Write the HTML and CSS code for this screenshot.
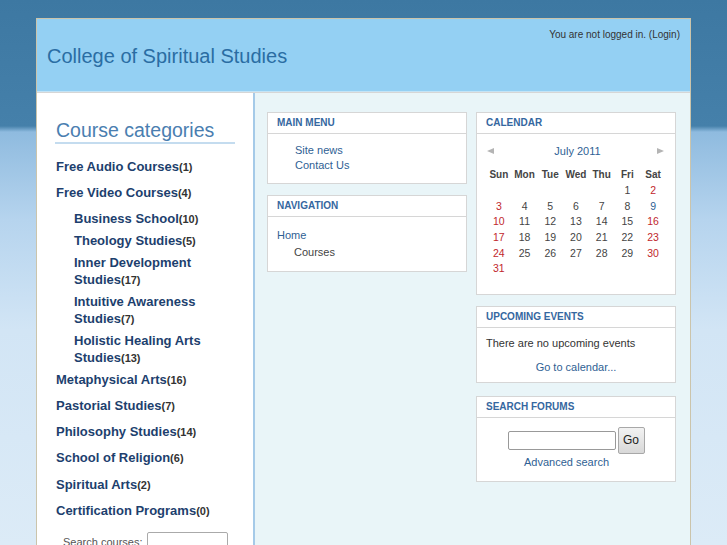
FILE: index.html
```html
<!DOCTYPE html>
<html>
<head>
<meta charset="utf-8">
<title>College of Spiritual Studies</title>
<link rel="stylesheet" href="styles.css">
</head>
<body>
<div class="page">
  <div class="header">
    <div class="login">You are not logged in. (<a href="#">Login</a>)</div>
    <h1 class="title">College of Spiritual Studies</h1>
  </div>
  <div class="main">
    <div class="left">
      <h2 class="cat-heading">Course categories</h2>
      <ul class="cats">
        <li class="cat"><a href="#">Free Audio Courses</a><span class="count">(1)</span></li>
        <li class="cat"><a href="#">Free Video Courses</a><span class="count">(4)</span></li>
        <li class="sub"><a href="#">Business School</a><span class="count">(10)</span></li>
        <li class="sub"><a href="#">Theology Studies</a><span class="count">(5)</span></li>
        <li class="sub"><a href="#">Inner Development Studies</a><span class="count">(17)</span></li>
        <li class="sub"><a href="#">Intuitive Awareness Studies</a><span class="count">(7)</span></li>
        <li class="sub"><a href="#">Holistic Healing Arts Studies</a><span class="count">(13)</span></li>
        <li class="cat"><a href="#">Metaphysical Arts</a><span class="count">(16)</span></li>
        <li class="cat"><a href="#">Pastorial Studies</a><span class="count">(7)</span></li>
        <li class="cat"><a href="#">Philosophy Studies</a><span class="count">(14)</span></li>
        <li class="cat"><a href="#">School of Religion</a><span class="count">(6)</span></li>
        <li class="cat"><a href="#">Spiritual Arts</a><span class="count">(2)</span></li>
        <li class="cat"><a href="#">Certification Programs</a><span class="count">(0)</span></li>
      </ul>
      <div class="search-courses">
        <label>Search courses:</label>
        <input type="text" class="sc-input">
      </div>
    </div>
    <div class="content">
      <div class="col">
        <div class="block">
          <div class="block-head">MAIN MENU</div>
          <div class="block-body menu">
            <a href="#">Site news</a>
            <a href="#">Contact Us</a>
          </div>
        </div>
        <div class="block">
          <div class="block-head">NAVIGATION</div>
          <div class="block-body nav">
            <a href="#" class="nav-home">Home</a>
            <span class="nav-courses">Courses</span>
          </div>
        </div>
      </div>
      <div class="col">
        <div class="block">
          <div class="block-head">CALENDAR</div>
          <div class="block-body cal">
            <div class="cal-month">
              <svg class="arrow" width="7" height="6" viewBox="0 0 7 6"><polygon points="0,3 7,0 7,6" fill="#b4b4b4"/></svg>
              <a href="#">July 2011</a>
              <svg class="arrow" width="7" height="6" viewBox="0 0 7 6"><polygon points="7,3 0,0 0,6" fill="#b4b4b4"/></svg>
            </div>
            <table class="cal-table">
              <tr class="cal-days"><th>Sun</th><th>Mon</th><th>Tue</th><th>Wed</th><th>Thu</th><th>Fri</th><th>Sat</th></tr>
              <tr><td></td><td></td><td></td><td></td><td></td><td>1</td><td class="we">2</td></tr>
              <tr><td class="we">3</td><td>4</td><td>5</td><td>6</td><td>7</td><td>8</td><td class="today">9</td></tr>
              <tr><td class="we">10</td><td>11</td><td>12</td><td>13</td><td>14</td><td>15</td><td class="we">16</td></tr>
              <tr><td class="we">17</td><td>18</td><td>19</td><td>20</td><td>21</td><td>22</td><td class="we">23</td></tr>
              <tr><td class="we">24</td><td>25</td><td>26</td><td>27</td><td>28</td><td>29</td><td class="we">30</td></tr>
              <tr><td class="we">31</td><td></td><td></td><td></td><td></td><td></td><td></td></tr>
            </table>
          </div>
        </div>
        <div class="block">
          <div class="block-head">UPCOMING EVENTS</div>
          <div class="block-body events">
            <div class="no-events">There are no upcoming events</div>
            <a href="#" class="goto">Go to calendar...</a>
          </div>
        </div>
        <div class="block block-search">
          <div class="block-head">SEARCH FORUMS</div>
          <div class="block-body search">
            <div class="search-row">
              <input type="text" class="sf-input">
              <button class="go">Go</button>
            </div>
            <a href="#" class="adv">Advanced search</a>
          </div>
        </div>
      </div>
    </div>
  </div>
</div>
</body>
</html>
```

FILE: styles.css
```css
html, body {
  margin: 0;
  padding: 0;
}
body {
  font-family: "Liberation Sans", Arial, sans-serif;
  height: 545px;
  overflow: hidden;
  background: linear-gradient(to bottom, #3d78a2 0, #4580aa 126px, #8fbbdf 132px, #b6d4ee 220px, #d2e5f5 330px, #dcebf7 545px);
}
a {
  text-decoration: none;
}
.page {
  width: 653px;
  margin: 18px auto 0;
  border: 1px solid #cbc4ab;
  border-bottom: none;
}
.header {
  height: 73px;
  box-sizing: border-box;
  background: #94d0f3;
  padding: 10px 10px 0 10px;
  border-bottom: 1px solid #c4e4f6;
}
.login {
  text-align: right;
  font-size: 10px;
  line-height: 12px;
  color: #333;
}
.login a {
  color: #333;
}
.title {
  margin: 3px 0 0 0;
  font-size: 20px;
  line-height: 24px;
  font-weight: normal;
  color: #2a6da3;
}
.main {
  display: flex;
  border-top: 1px solid #d6d6d6;
  height: 460px;
}
.left {
  width: 218px;
  flex: none;
  box-sizing: border-box;
  background: #fff;
  border-right: 2px solid #a5cae8;
  padding: 25px 18px 0 18px;
}
.cat-heading {
  margin: 0;
  font-size: 19.5px;
  line-height: 24px;
  font-weight: normal;
  color: #4a7eb0;
  padding-left: 1px;
  border-bottom: 2px solid #c4dcef;
}
.cats {
  list-style: none;
  margin: 11px 0 0 0;
  padding: 0 0 0 1px;
}
.cats li {
  font-size: 13px;
  line-height: 17px;
  font-weight: bold;
}
.cats li a {
  color: #1d3f6e;
}
.cat {
  padding: 3px 0 6.3px;
}
.sub {
  padding: 2.9px 0 1.9px 18px;
}
.count {
  font-size: 11px;
  line-height: 1;
  color: #333;
}
.search-courses {
  display: flex;
  align-items: center;
  gap: 5px;
  margin-top: 7px;
  padding-left: 8px;
  font-size: 11px;
  color: #555;
}
.sc-input {
  width: 81px;
  height: 19px;
  box-sizing: border-box;
  border: 1px solid #aaa;
  border-radius: 2px;
  margin: 0;
}
.content {
  flex: 1;
  display: flex;
  gap: 9px;
  background: #e9f5f8;
  padding: 19px 14px 0 12px;
}
.col {
  width: 200px;
  display: flex;
  flex-direction: column;
  gap: 11px;
}
.block {
  background: #fff;
  border: 1px solid #d6d6d6;
}
.block-search {
  margin-top: 2px;
}
.block-head {
  font-size: 10px;
  font-weight: bold;
  line-height: 20px;
  color: #3567a0;
  padding: 0 9px;
  border-bottom: 1px solid #d6d6d6;
}
.block-body {
  font-size: 11px;
  color: #333;
}
.menu {
  display: flex;
  flex-direction: column;
  padding: 9px 0 10px 27px;
  line-height: 15px;
}
.menu a {
  color: #2f5f94;
}
.nav {
  display: flex;
  flex-direction: column;
  padding: 10px 0 10px 9px;
  line-height: 17px;
}
.nav-home {
  color: #2f5f94;
}
.nav-courses {
  padding-left: 17px;
  color: #444;
}
.cal {
  padding: 9px 0 17px 0;
}
.cal-month {
  display: flex;
  justify-content: space-between;
  align-items: center;
  padding: 0 11px 0 10px;
  line-height: 16px;
  font-size: 11px;
}
.cal-month a {
  color: #2f5f94;
  margin-left: 4px;
}
.cal-table {
  border-collapse: collapse;
  width: 180px;
  margin: 7px 0 0 9px;
  table-layout: fixed;
}
.cal-table th {
  font-size: 10px;
  font-weight: bold;
  color: #444;
  height: 17px;
  padding: 0;
  text-align: center;
}
.cal-table td {
  font-size: 10.5px;
  color: #444;
  height: 15.6px;
  padding: 0;
  text-align: center;
  line-height: 15px;
}
.cal-table td.we {
  color: #c1272d;
}
.cal-table td.today {
  color: #2f5f94;
}
.events {
  padding: 8px 0 8px 9px;
  line-height: 14px;
  display: flex;
  flex-direction: column;
}
.goto {
  color: #2f5f94;
  margin-top: 10px;
  align-self: center;
  margin-right: 9px;
}
.search {
  padding: 9px 0 12px;
  display: flex;
  flex-direction: column;
  align-items: center;
  line-height: 14px;
}
.search-row {
  display: flex;
  align-items: center;
  gap: 2px;
}
.sf-input {
  width: 108px;
  height: 19px;
  box-sizing: border-box;
  margin: 0;
  border: 1px solid #999;
  border-radius: 2px;
  background: #fff;
}
.go {
  width: 27px;
  height: 27px;
  box-sizing: border-box;
  padding: 0;
  margin: 0;
  border: 1px solid #a8a8a8;
  border-radius: 2px;
  background: linear-gradient(#f2f2f2, #d8d8d8);
  font-family: "Liberation Sans", Arial, sans-serif;
  font-size: 12px;
  color: #222;
}
.adv {
  color: #2f5f94;
  margin-top: 1px;
  margin-right: 19px;
}
```
